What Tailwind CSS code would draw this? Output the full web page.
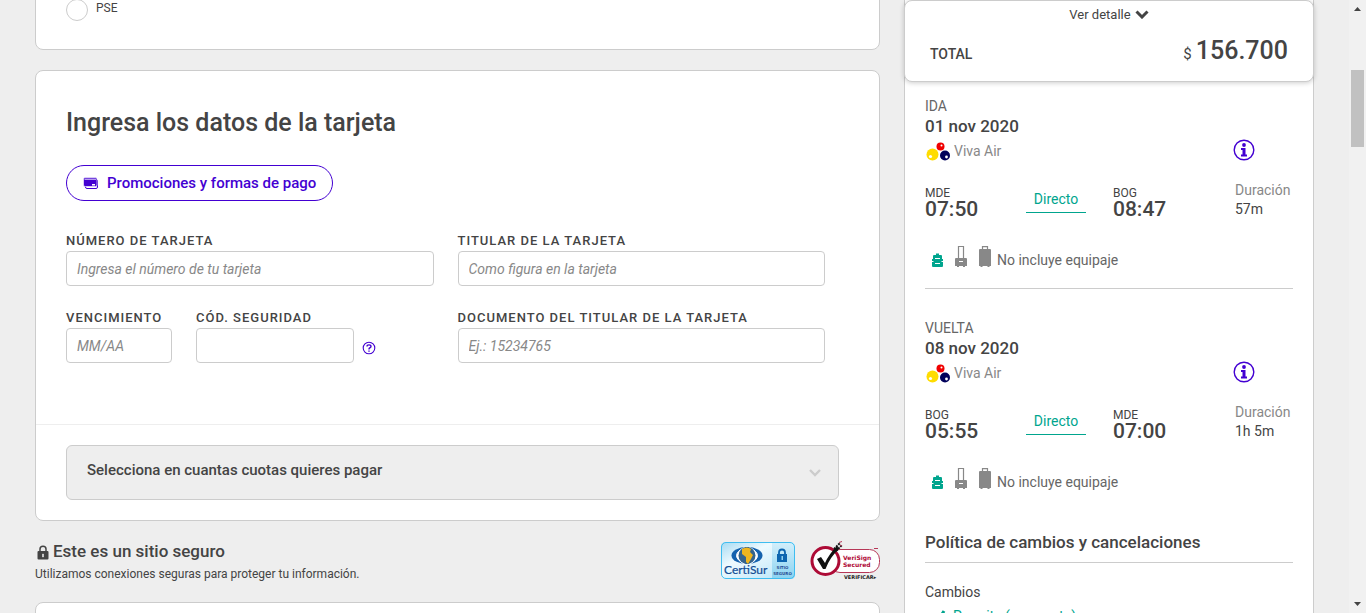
<!DOCTYPE html>
<html lang="es">
<head>
<meta charset="utf-8">
<meta name="viewport" content="width=device-width, initial-scale=1">
<title>Pago</title>
<script src="https://cdn.jsdelivr.net/npm/@tailwindcss/browser@4"></script>
</head>
<body class="flex h-screen overflow-hidden bg-[#eeeeee] font-['Roboto','Liberation_Sans',sans-serif] text-[#444444]">
<svg class="hidden" aria-hidden="true">
  <symbol id="viva" viewBox="0 0 24 19">
    <circle cx="6.500" cy="12.500" r="6" fill="#ffdc00"/><circle cx="4.500" cy="14.500" r="1.600" fill="#fff"/>
    <circle cx="14.500" cy="4.500" r="4" fill="#f00000"/><circle cx="15.500" cy="3.500" r="1" fill="#fff"/>
    <circle cx="19" cy="13.500" r="5" fill="#00005a"/><circle cx="20.500" cy="15" r="1.400" fill="#fff"/>
  </symbol>
  <symbol id="info" viewBox="0 0 22 22">
    <circle cx="11" cy="11" r="9.800" fill="none" stroke="#4300d2" stroke-width="1.400"/>
    <circle cx="11" cy="6" r="1.900" fill="#4300d2"/>
    <path d="M8 9h4.500v6.500H14V17.500H8V15.500h1.500V11H8z" fill="#4300d2"/>
  </symbol>
  <symbol id="bags" viewBox="0 0 60 22">
    <path d="M4 9V7.500H7V9H9Q10 9 10 10V13H11V20Q11 21 10 21H1Q0 21 0 20V13H1V10Q1 9 2 9z" fill="#00a58e"/>
    <path d="M3 12.500H8M3 17.500H8M0 15.500H1.500M9.500 15.500H11" stroke="#fff" stroke-width="1"/>
    <path d="M26.500 12V0.500H31.500V12" fill="none" stroke="#888" stroke-width="1.200"/>
    <path d="M24 12H34Q35 12 35 13V20H33V21H31V20H27V21H25V20H23V13Q23 12 24 12z" fill="#888"/>
    <path d="M27 15.500h4" stroke="#fff" stroke-width="1"/>
    <path d="M50.500 4V0.600H55.500V4" fill="none" stroke="#888" stroke-width="1.200"/>
    <path d="M48 3H58Q59 3 59 4V20H57.500V21H55.500V20H50.500V21H48.500V20H47V4Q47 3 48 3z" fill="#888"/>
  </symbol>
</svg>

<div class="flex min-w-0 flex-1 items-start gap-6 px-[35px]">
  <main class="flex min-w-0 flex-1 flex-col">
    <section class="-mt-8 rounded-lg border border-[#cccccc] bg-white px-[30px] pt-[31px] pb-[29px]">
      <label class="flex items-center gap-2 text-xs"><input type="radio" name="medio" class="-my-px size-[22px] appearance-none rounded-full border border-[#cccccc] bg-white"><span class="-mt-1">PSE</span></label>
    </section>

    <section class="mt-5 rounded-lg border border-[#cccccc] bg-white pb-5">
      <div class="flex flex-col px-[30px] pt-9 pb-[61px]">
        <h1 class="text-[25px] leading-8 font-medium">Ingresa los datos de la tarjeta</h1>
        <button type="button" class="mt-[26px] flex h-9 items-center gap-2 self-start rounded-full border border-[#4300d2] px-4 text-[15px] font-medium text-[#4300d2]">
          <svg class="h-3 w-4" viewBox="0 0 16 12" aria-hidden="true"><rect x="2.500" y="2.500" width="12" height="9" rx="1.500" fill="#fff" stroke="#4300d2"/><rect x="0.500" y="0.500" width="13.500" height="9" rx="1.500" fill="#4300d2" stroke="#fff" stroke-width=".6"/><path d="M1.500 2.200H13" stroke="#fff" stroke-width=".9"/><path d="M9 7h3v1.500H9z" fill="#fff"/></svg>
          <span>Promociones y formas de pago</span>
        </button>
        <form class="mt-[31px] mr-6 grid grid-cols-2 gap-x-6 gap-y-[23px]">
          <div class="flex flex-col gap-[1px]">
            <label for="num" class="text-[13px] leading-[18px] font-medium tracking-[1px] uppercase">Número de tarjeta</label>
            <input id="num" placeholder="Ingresa el número de tu tarjeta" class="h-[35px] w-full rounded border border-[#cccccc] bg-white px-2.5 text-[14px] placeholder:text-[#888888] placeholder:italic">
          </div>
          <div class="flex flex-col gap-[1px]">
            <label for="tit" class="text-[13px] leading-[18px] font-medium tracking-[1px] uppercase">Titular de la tarjeta</label>
            <input id="tit" placeholder="Como figura en la tarjeta" class="h-[35px] w-full rounded border border-[#cccccc] bg-white px-2.5 text-[14px] placeholder:text-[#888888] placeholder:italic">
          </div>
          <div class="flex gap-6">
            <div class="flex w-[106px] flex-col gap-[1px]">
              <label for="ven" class="text-[13px] leading-[18px] font-medium tracking-[1px] uppercase">Vencimiento</label>
              <input id="ven" placeholder="MM/AA" class="h-[35px] w-full rounded border border-[#cccccc] bg-white px-2.5 text-[14px] placeholder:text-[#888888] placeholder:italic">
            </div>
            <div class="flex flex-col gap-[1px]">
              <label for="cod" class="text-[13px] leading-[18px] font-medium tracking-[1px] uppercase">Cód. seguridad</label>
              <div class="flex items-center gap-2">
                <input id="cod" class="h-[35px] w-[158px] rounded border border-[#cccccc] bg-white px-2.5 text-[14px]">
                <button type="button" aria-label="Ayuda" class="mt-1"><svg class="size-[14px]" viewBox="0 0 14 14" fill="none" stroke="#4300d2"><circle cx="7" cy="7" r="5.800" stroke-width="1.100"/><path d="M5 5.500Q5 3.900 7 3.900Q9 3.900 9 5.500Q9 6.600 7.600 7Q7 7.300 7 8.500" stroke-width="1.400"/><path d="M7 9.500V10.800" stroke-width="1.400"/></svg></button>
              </div>
            </div>
          </div>
          <div class="flex flex-col gap-[1px]">
            <label for="doc" class="text-[13px] leading-[18px] font-medium tracking-[1px] uppercase">Documento del titular de la tarjeta</label>
            <input id="doc" placeholder="Ej.: 15234765" class="h-[35px] w-full rounded border border-[#cccccc] bg-white px-2.5 text-[14px] placeholder:text-[#888888] placeholder:italic">
          </div>
        </form>
      </div>
      <div class="border-t border-[#eeeeee] pt-5 pr-10 pl-[30px]">
        <div class="relative">
          <select aria-label="Cuotas" class="h-[55px] w-full appearance-none rounded-md border border-[#cccccc] bg-[#eeeeee] px-5 pb-1 text-[15px] font-medium"><option>Selecciona en cuantas cuotas quieres pagar</option></select>
          <svg class="pointer-events-none absolute top-6 right-[18px] h-2 w-3" viewBox="0 0 12 8" fill="none" stroke="#cccccc" stroke-width="2.400"><path d="M1 1L6 6L11 1"/></svg>
        </div>
      </div>
    </section>

    <section class="mt-[19px] flex items-start justify-between">
      <div>
        <h2 class="flex h-6 items-center gap-1 text-[17px] font-medium">
          <svg class="ml-0.5 h-[15px] w-3" viewBox="0 0 12 15"><path d="M3 7V4Q3 1.200 6 1.200Q9 1.200 9 4V7" fill="none" stroke="#444" stroke-width="1.500"/><rect x="0.500" y="6" width="11" height="8.500" rx="1" fill="#444"/><path d="M5.500 9h1v3h-1z" fill="#eee" stroke="#eee" stroke-width=".5"/></svg>
          Este es un sitio seguro</h2>
        <p class="mt-px text-xs leading-[18px]">Utilizamos conexiones seguras para proteger tu información.</p>
      </div>
      <div class="flex gap-3.5">
        <svg class="h-10 w-[76px]" viewBox="0 0 76 40" role="img" aria-label="CertiSur sitio seguro">
          <defs><linearGradient id="cs" x1="0" y1="0" x2="1" y2="1"><stop offset="0" stop-color="#a4daf2"/><stop offset=".35" stop-color="#eefaff"/><stop offset="1" stop-color="#b5e4f8"/></linearGradient><linearGradient id="cr" x1="0" y1="0" x2="0" y2="1"><stop offset="0" stop-color="#d4effb"/><stop offset="1" stop-color="#8ad3f1"/></linearGradient></defs>
          <rect x="1" y="2" width="74" height="37" rx="4.500" fill="url(#cs)"/><path d="M52 2H70.500Q75 2 75 6.500V34.500Q75 39 70.500 39H52z" fill="url(#cr)"/>
          <rect x="1.500" y="2.500" width="73" height="36" rx="4.500" fill="none" stroke="#3fbdf0"/>
          <ellipse cx="27" cy="15.500" rx="15.500" ry="8.500" fill="#1462ae"/><path d="M25 7Q13 15.500 25 24.500Q8 15.500 25 7zM29 7Q41 15.500 29 24.500Q46 15.500 29 7z" fill="#fff" stroke="#fff"/>
          <circle cx="27" cy="15.500" r="8.500" fill="#35648c"/><path d="M22 9Q27 6 31 9L30 12L33 15L31 19L28 24L26 22L26 17L22 14z" fill="#eeb51f"/>
          <path d="M59 15V12.500Q59 9.500 62 9.500Q65 9.500 65 12.500V15" fill="none" stroke="#0c65b0" stroke-width="1.800"/><rect x="57" y="14" width="10" height="8" fill="#0c65b0"/><path d="M61.500 16h1.500v4h-1.500z" fill="#8fd4f2"/>
          <text x="4" y="34" font-family="Lato, sans-serif" font-size="12" font-weight="400" fill="#124c93" stroke="#124c93" stroke-width=".2">CertiSur</text>
          <text x="62.500" y="29" text-anchor="middle" font-family="DejaVu Sans, sans-serif" font-size="4" font-weight="700" fill="#2a4e92">SITIO</text>
          <text x="62.500" y="34.500" text-anchor="middle" font-family="DejaVu Sans, sans-serif" font-size="4" font-weight="700" fill="#2a4e92">SEGURO</text>
        </svg>
        <svg class="h-10 w-[70px]" viewBox="0 0 70 40" role="img" aria-label="VeriSign Secured verificar">
          <rect x="20" y="9.500" width="49.500" height="23" rx="10" fill="#fff" stroke="#b63757"/>
          <circle cx="15.500" cy="21" r="13.500" fill="#fff" stroke="#ad0b36" stroke-width="3"/>
          <path d="M7 19L11 17L15 23Q19 14 27 6L29 9Q20 17 15.500 29H13z" fill="#111"/>
          <path d="M24 9L30 3M26 11L32 5" stroke="#111" stroke-width="2" stroke-dasharray="2 1"/><path d="M29 2.500l3-1M30 5l2 1" stroke="#b63757"/>
          <text x="33" y="20" font-family="DejaVu Sans, sans-serif" font-size="6" font-weight="700" fill="#b00c38">VeriSign</text>
          <text x="33" y="26.500" font-family="DejaVu Sans, sans-serif" font-size="6" font-weight="700" fill="#b00c38">Secured</text>
          <text x="34" y="38.500" font-family="DejaVu Sans, sans-serif" font-size="5" font-weight="700" fill="#222">VERIFICAR▸</text>
          <path d="M64 8.500h4" stroke="#b63757"/>
        </svg>
      </div>
    </section>
    <section class="mt-[19px] h-24 rounded-lg border border-[#cccccc] bg-white"></section>
  </main>

  <aside class="w-[410px] shrink-0 border-x border-[#cccccc] bg-white text-[14px]">
    <div class="-mx-px flex h-[82px] flex-col rounded-lg border border-[#cccccc] bg-white shadow-[0_1px_5px_rgba(0,0,0,0.2)]">
      <button type="button" class="mt-1 flex h-5 items-center justify-center gap-1 self-center text-[13px] leading-5">Ver detalle
        <svg class="-mt-0.5 h-[9px] w-[14px]" viewBox="0 0 14 9" fill="none" stroke="#444" stroke-width="3"><path d="M1.500 1.500L7 7L12.500 1.500"/></svg></button>
      <div class="mt-2.5 flex items-baseline justify-between px-[25px]">
        <span class="text-[14px] font-medium">TOTAL</span>
        <span class="flex items-baseline gap-1"><span class="text-[15px]">$</span><span class="text-[25px] leading-8 font-medium">156.700</span></span>
      </div>
    </div>

    <section class="px-5 pt-[14px]">
      <div class="border-b border-[#cccccc] pb-5">
        <p class="h-5 leading-5 text-[#666666]">IDA</p>
        <p class="h-5 text-[17px] leading-5 font-medium">01 nov 2020</p>
        <div class="mt-px flex h-[26px] items-center justify-between text-[#888888]">
          <span class="mt-0.5 flex items-center gap-1"><svg class="ml-px h-[19px] w-6"><use href="#viva"/></svg><span>Viva Air</span></span>
          <button type="button" aria-label="Información" class="mr-[38px]"><svg class="size-[22px]"><use href="#info"/></svg></button>
        </div>
        <div class="mt-4 grid grid-cols-[101px_60px_27px_122px_58px] items-start">
          <div><p class="mt-2 h-3 text-xs leading-3">MDE</p><p class="text-[21px] leading-5 font-medium">07:50</p></div>
          <p class="mt-[11px] border-b border-[#00a58e] pb-1 text-center leading-[18px] text-[#00a58e]">Directo</p>
          <div class="col-start-4"><p class="mt-2 h-3 text-xs leading-3">BOG</p><p class="text-[21px] leading-5 font-medium">08:47</p></div>
          <div class="mt-px"><p class="h-5 leading-5 text-[#888888]">Duración</p><p class="h-5 leading-[18px]">57m</p></div>
        </div>
        <div class="mt-[26px] flex items-end gap-[5px] pl-[7px] text-[#666666]"><svg class="h-[22px] w-[60px]"><use href="#bags"/></svg><span class="leading-4">No incluye equipaje</span></div>
      </div>
      <div class="pt-[29px]">
        <p class="h-5 leading-5 text-[#666666]">VUELTA</p>
        <p class="h-5 text-[17px] leading-5 font-medium">08 nov 2020</p>
        <div class="mt-px flex h-[26px] items-center justify-between text-[#888888]">
          <span class="mt-0.5 flex items-center gap-1"><svg class="ml-px h-[19px] w-6"><use href="#viva"/></svg><span>Viva Air</span></span>
          <button type="button" aria-label="Información" class="mr-[38px]"><svg class="size-[22px]"><use href="#info"/></svg></button>
        </div>
        <div class="mt-4 grid grid-cols-[101px_60px_27px_122px_58px] items-start">
          <div><p class="mt-2 h-3 text-xs leading-3">BOG</p><p class="text-[21px] leading-5 font-medium">05:55</p></div>
          <p class="mt-[11px] border-b border-[#00a58e] pb-1 text-center leading-[18px] text-[#00a58e]">Directo</p>
          <div class="col-start-4"><p class="mt-2 h-3 text-xs leading-3">MDE</p><p class="text-[21px] leading-5 font-medium">07:00</p></div>
          <div class="mt-px"><p class="h-5 leading-5 text-[#888888]">Duración</p><p class="h-5 leading-[18px]">1h 5m</p></div>
        </div>
        <div class="mt-[26px] flex items-end gap-[5px] pl-[7px] text-[#666666]"><svg class="h-[22px] w-[60px]"><use href="#bags"/></svg><span class="leading-4">No incluye equipaje</span></div>
      </div>
      <h2 class="mt-10 border-b border-[#cccccc] pb-2 text-[17px] leading-6 font-medium">Política de cambios y cancelaciones</h2>
      <p class="mt-[19px] leading-5">Cambios</p>
      <p class="mt-1 flex items-center gap-1.5 pl-2.5 leading-5 text-[#00a58e]"><svg class="h-3 w-3" viewBox="0 0 12 12" fill="none" stroke="#00a58e" stroke-width="3"><path d="M1 5L4 9L9 1"/></svg>Permite (con costo)</p>
    </section>
  </aside>
</div>

<div class="flex w-[17px] shrink-0 flex-col items-center justify-between bg-[#f1f1f1]" aria-hidden="true">
  <svg class="h-[70px] w-[17px] shrink-0" viewBox="0 0 17 70"><path d="M5 11L8.500 7L12 11z" fill="#444"/></svg>
  <div class="h-[77px] w-[13px] shrink-0 bg-[#c1c1c1]"></div>
  <div class="flex-1"></div>
  <svg class="h-[17px] w-[17px] shrink-0" viewBox="0 0 17 17"><path d="M5 6L8.500 10L12 6z" fill="#444"/></svg>
</div>
</body>
</html>
